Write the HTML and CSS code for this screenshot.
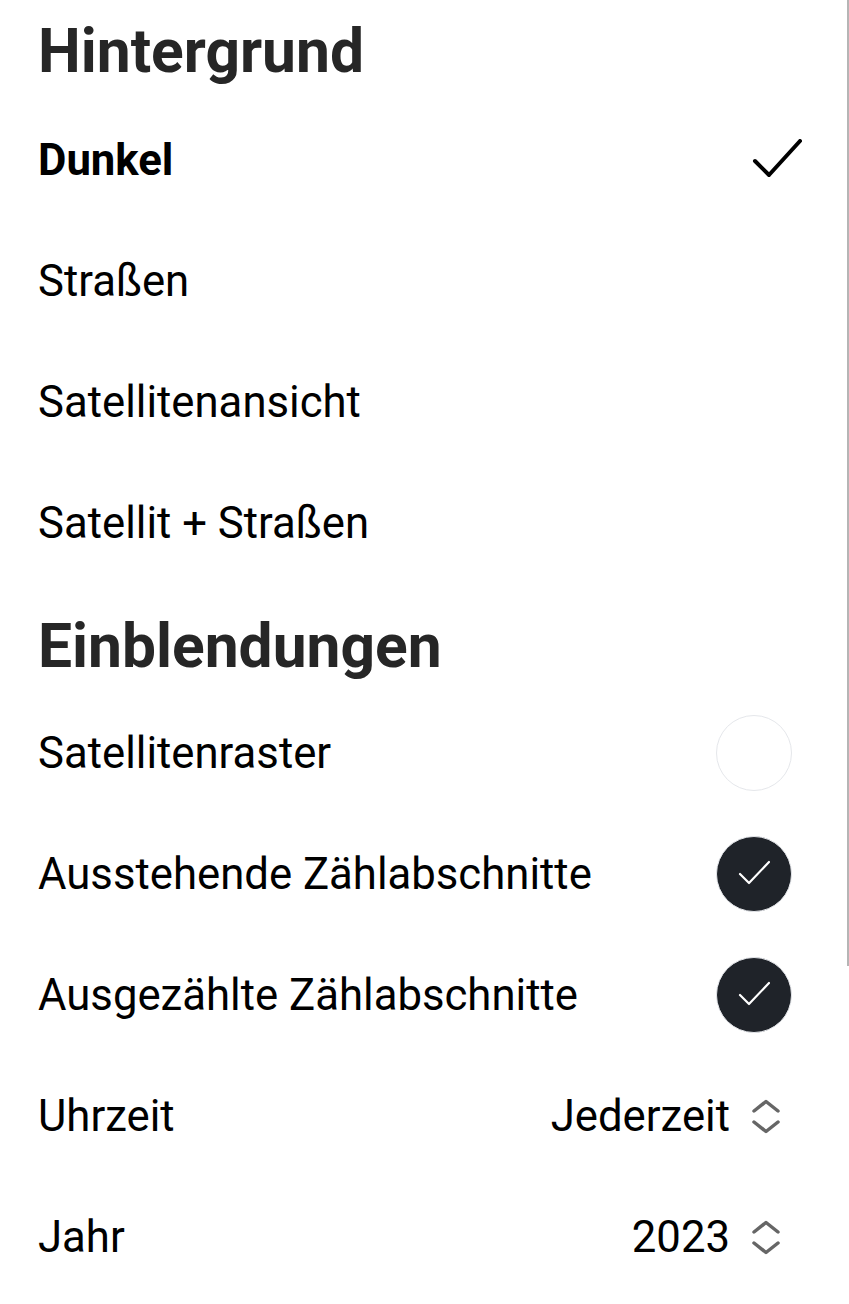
FILE: index.html
```html
<!DOCTYPE html>
<html lang="de">
<head>
<meta charset="utf-8">
<title>Kartenebenen</title>
<link rel="stylesheet" href="styles.css">
</head>
<body>
<div class="sheet">
  <h2 class="section-title first">Hintergrund</h2>
  <ul class="list">
    <li class="row selected">
      <span class="label">Dunkel</span>
      <svg class="check" width="52" height="42" viewBox="0 0 52 42"><path d="M3 22 L17 36 L48 2" fill="none" stroke="#000" stroke-width="4" stroke-linecap="round" stroke-linejoin="round"/></svg>
    </li>
    <li class="row"><span class="label">Straßen</span></li>
    <li class="row"><span class="label">Satellitenansicht</span></li>
    <li class="row"><span class="label">Satellit + Straßen</span></li>
  </ul>
  <h2 class="section-title">Einblendungen</h2>
  <ul class="list">
    <li class="row">
      <span class="label">Satellitenraster</span>
      <span class="toggle"></span>
    </li>
    <li class="row">
      <span class="label">Ausstehende Zählabschnitte</span>
      <span class="toggle on"><svg width="32" height="26" viewBox="0 0 32 26"><path d="M2 14 L11 23 L31 2" fill="none" stroke="#fff" stroke-width="2.2" stroke-linecap="round" stroke-linejoin="round"/></svg></span>
    </li>
    <li class="row">
      <span class="label">Ausgezählte Zählabschnitte</span>
      <span class="toggle on"><svg width="32" height="26" viewBox="0 0 32 26"><path d="M2 14 L11 23 L31 2" fill="none" stroke="#fff" stroke-width="2.2" stroke-linecap="round" stroke-linejoin="round"/></svg></span>
    </li>
    <li class="row">
      <span class="label">Uhrzeit</span>
      <span class="select"><span class="value">Jederzeit</span><svg class="updown" width="30" height="36" viewBox="0 0 30 36"><path d="M3 12 L15 2.5 L27 12 M3 23 L15 32.5 L27 23" fill="none" stroke="#666" stroke-width="3.5" stroke-linecap="round" stroke-linejoin="round"/></svg></span>
    </li>
    <li class="row">
      <span class="label">Jahr</span>
      <span class="select"><span class="value">2023</span><svg class="updown" width="30" height="36" viewBox="0 0 30 36"><path d="M3 12 L15 2.5 L27 12 M3 23 L15 32.5 L27 23" fill="none" stroke="#666" stroke-width="3.5" stroke-linecap="round" stroke-linejoin="round"/></svg></span>
    </li>
  </ul>
</div>
<div class="scrollbar"></div>
</body>
</html>
```

FILE: styles.css
```css
html, body {
  margin: 0;
  padding: 0;
  background: #fff;
}

body {
  font-family: Roboto, "Liberation Sans", sans-serif;
  color: #000;
  overflow: hidden;
}

.sheet {
  padding: 17px 0 0 38px;
}

.section-title {
  margin: 0 0 12px 0;
  font-size: 60.5px;
  line-height: 70px;
  font-weight: 700;
  color: #262626;
}

.list + .section-title {
  margin-top: 29px;
  margin-bottom: 10px;
}

.list {
  list-style: none;
  margin: 0;
  padding: 0;
}

.row {
  height: 121px;
  display: flex;
  align-items: center;
  justify-content: space-between;
}

.label {
  font-size: 43.7px;
  line-height: 52px;
}

.selected .label {
  font-weight: 700;
}

.check {
  margin-right: 45px;
}

.toggle {
  width: 74px;
  height: 74px;
  border-radius: 50%;
  border: 1.5px solid #e5e7eb;
  margin-right: 57px;
  display: flex;
  align-items: center;
  justify-content: center;
  box-sizing: content-box;
}

.toggle.on {
  background: #1f2329;
}

.toggle svg {
  margin-top: -2px;
}

.select {
  display: flex;
  align-items: center;
  gap: 21px;
  margin-right: 68px;
}

.value {
  font-size: 43.7px;
  line-height: 52px;
}

.updown {
  margin-top: 2px;
}

.scrollbar {
  position: absolute;
  top: 0;
  right: 0;
  width: 2px;
  height: 966px;
  background: #b5b5b5;
}
```
